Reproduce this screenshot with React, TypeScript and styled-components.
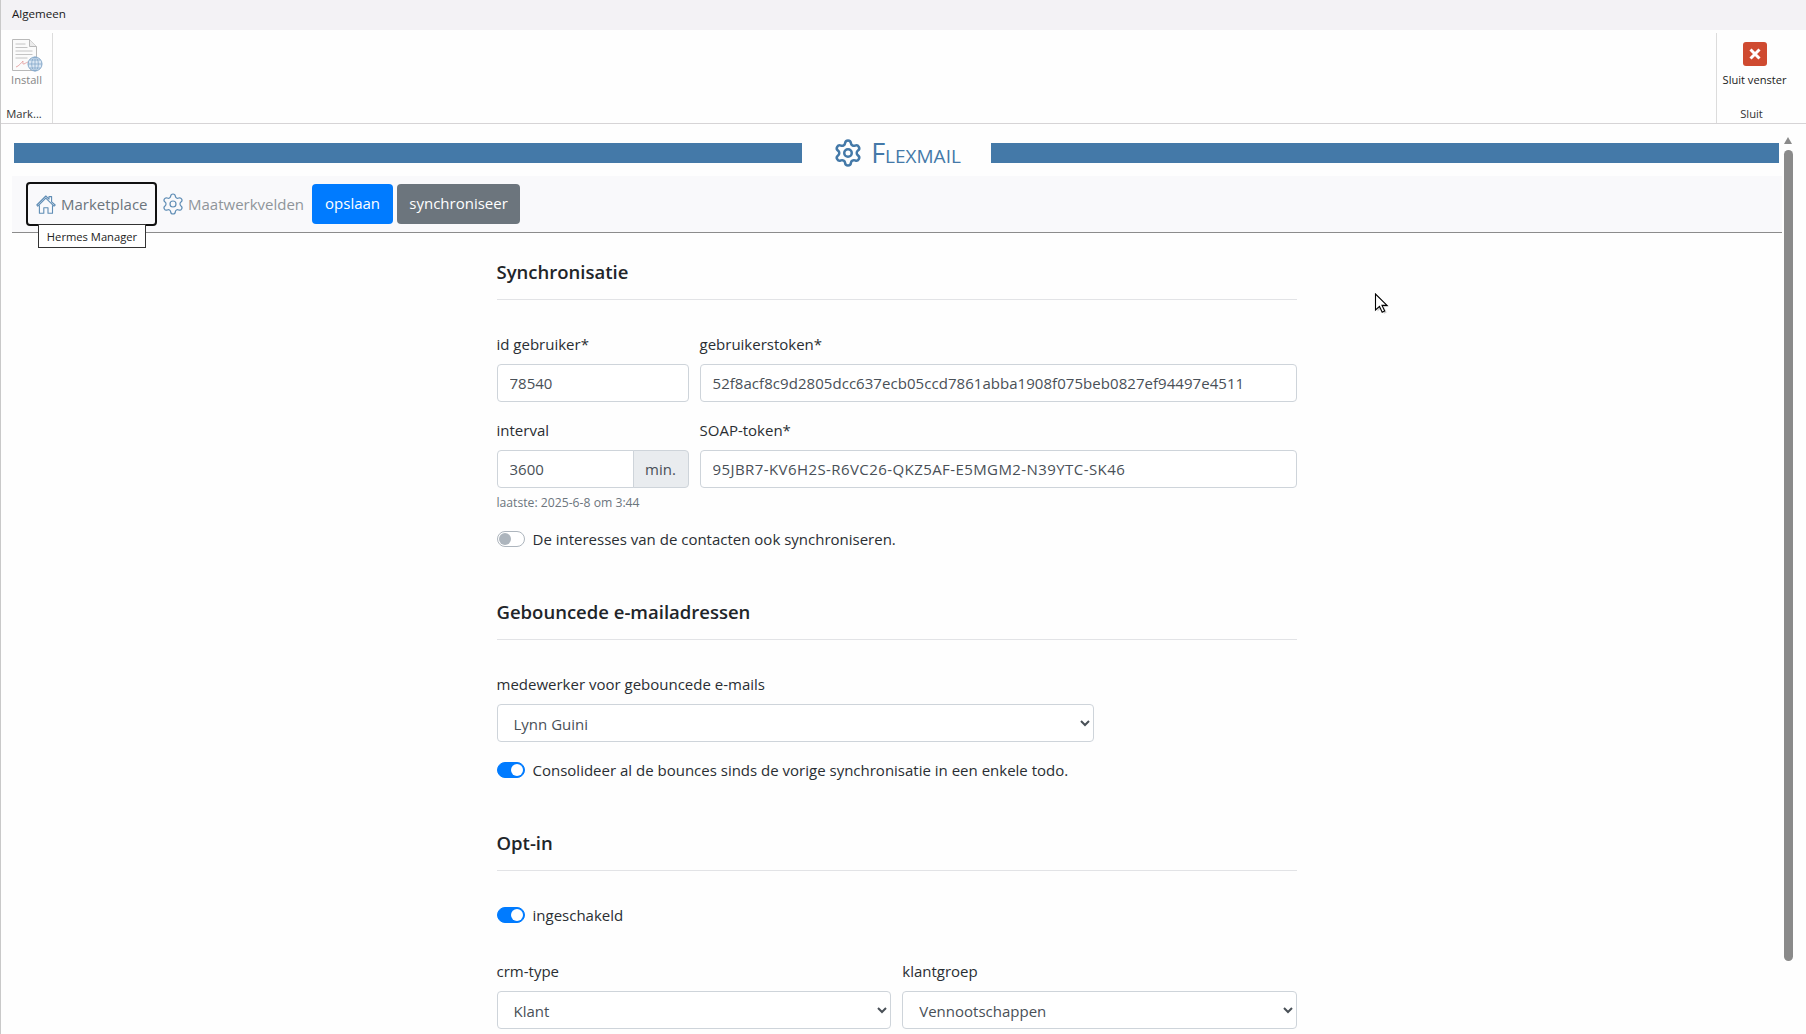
import React from "react";
import styled, { createGlobalStyle } from "styled-components";
import { Settings } from "lucide-react";

const Global = createGlobalStyle`
  html, body { margin: 0; padding: 0; height: 100%; background: #fefefe; }
  #root { height: 100%; }
  * { box-sizing: border-box; }
  body { font-family: "Open Sans", "Noto Sans", sans-serif; font-size: 15px; color: #212529; overflow: hidden; }
`;

const Page = styled.div`
  position: relative;
  height: 1034px;
  display: flex;
  flex-direction: column;
  overflow: hidden;
  border-left: 1px solid #c9c9c9;
`;

const TabBar = styled.div`
  height: 30px;
  flex: none;
  display: flex;
  align-items: center;
  padding: 0 0 4px 11px;
  background: #f3f2f5;
  font-size: 11.6px;
  color: #1a1a1a;
`;

const Ribbon = styled.div`
  height: 94px;
  flex: none;
  display: flex;
  justify-content: space-between;
  background: #fefefe;
  border-bottom: 1px solid #d6d4d6;
`;

const RibbonGroup = styled.div<{ $w: number; $side: "left" | "right"; $pr?: number }>`
  width: ${(p) => p.$w}px;
  margin-top: 3px;
  padding-right: ${(p) => p.$pr ?? 0}px;
  display: flex;
  flex-direction: column;
  align-items: center;
  ${(p) => (p.$side === "left" ? "border-right" : "border-left")}: 1px solid #dcdcdc;
`;

const RibbonAction = styled.div<{ $muted?: boolean }>`
  height: 74px;
  padding-top: 5px;
  display: flex;
  flex-direction: column;
  align-items: center;
  font-size: 11.1px;
  line-height: 14px;
  white-space: nowrap;
  color: ${(p) => (p.$muted ? "#858585" : "#1a1a1a")};
`;

const RibbonIconSlot = styled.div`
  height: 34px;
  display: flex;
  align-items: flex-start;
  justify-content: center;
  margin-bottom: 1px;
`;

const CloseIcon = styled.div`
  width: 24px;
  height: 24px;
  margin-top: 4px;
  border-radius: 3px;
  background: #cf4a30;
  display: flex;
  align-items: center;
  justify-content: center;
`;

const RibbonLabel = styled.div<{ $mr?: number }>`
  margin-right: ${(p) => p.$mr ?? 0}px;
  font-size: 11.2px;
  line-height: 14px;
  color: #333;
  white-space: nowrap;
`;

const Main = styled.div`
  flex: 1;
  display: flex;
  min-height: 0;
`;

const Content = styled.div`
  flex: 1;
  min-width: 0;
  padding-left: 11px;
`;

const Scroll = styled.div`
  width: 24px;
  flex: none;
  padding: 13px 0 0 2px;
  display: flex;
  flex-direction: column;
  gap: 6px;
`;

const ScrollArrow = styled.div`
  width: 0;
  height: 0;
  border-left: 4.5px solid transparent;
  border-right: 4.5px solid transparent;
  border-bottom: 7px solid #8a8a8a;
`;

const ScrollThumb = styled.div`
  width: 9px;
  height: 811px;
  border-radius: 5px;
  background: #8a8a8a;
`;

const Banner = styled.div`
  margin: 19px 3px 0 2px;
  height: 20px;
  display: flex;
  align-items: center;
`;

const BannerBar = styled.div`
  height: 20px;
  flex: 1;
  background: #4479a8;
`;

const BannerTitle = styled.div`
  width: 189px;
  flex: none;
  display: flex;
  align-items: center;
  justify-content: center;
  gap: 8px;
  padding-left: 1px;
  color: #4479a8;
  font-size: 27px;
  font-variant: small-caps;
  line-height: 20px;
`;

const SubBar = styled.div`
  margin-top: 13px;
  height: 57px;
  padding: 6px 0 0 14px;
  display: flex;
  align-items: flex-start;
  background: #f9f9fb;
  border-bottom: 1px solid #8c8c8c;
`;

const NavButton = styled.div`
  position: relative;
  width: 131px;
  height: 44px;
  display: flex;
  align-items: center;
  gap: 5px;
  padding-left: 8px;
  border: 2px solid #111;
  border-radius: 4px;
  color: #6c757d;
  white-space: nowrap;
`;

const Tooltip = styled.div`
  position: absolute;
  left: 10px;
  top: 40px;
  width: 108px;
  height: 24px;
  display: flex;
  align-items: center;
  justify-content: center;
  background: #fff;
  border: 1px solid #333;
  font-size: 11.2px;
  color: #222;
`;

const NavLink = styled.div`
  height: 44px;
  margin-left: 4px;
  display: flex;
  align-items: center;
  gap: 3px;
  color: #8f959a;
  white-space: nowrap;
`;

const ActionButton = styled.div<{ $bg: string; $w: number; $ml: number }>`
  width: ${(p) => p.$w}px;
  height: 40px;
  margin: 2px 0 0 ${(p) => p.$ml}px;
  display: flex;
  align-items: center;
  justify-content: center;
  border-radius: 4px;
  background: ${(p) => p.$bg};
  color: #fff;
  padding-bottom: 2px;
`;

const Form = styled.div`
  width: 800.5px;
  margin-left: 484.5px;
`;

const Section = styled.section<{ $mt: number }>`
  margin-top: ${(p) => p.$mt}px;
`;

const Heading = styled.h5`
  margin: 0 0 33px;
  padding-bottom: 15px;
  font-size: 18.5px;
  line-height: 24px;
  font-weight: 600;
  color: #212529;
  border-bottom: 1px solid #e2e3e6;
`;

const Row = styled.div<{ $cols: string; $mt?: number }>`
  display: grid;
  grid-template-columns: ${(p) => p.$cols};
  column-gap: 11px;
  margin-top: ${(p) => p.$mt ?? 0}px;
`;

const Label = styled.label`
  display: block;
  margin-bottom: 9px;
  line-height: 22px;
  color: #2a2e33;
`;

const Input = styled.input<{ $spacing?: number }>`
  display: block;
  width: 100%;
  height: 38px;
  padding: 0 12px;
  font: inherit;
  letter-spacing: ${(p) => p.$spacing ?? 0}px;
  color: #495057;
  background: #fff;
  border: 1px solid #ced4da;
  border-radius: 4px;
  outline: none;
`;

const InputGroup = styled.div`
  display: flex;
`;

const GroupInput = styled(Input)`
  flex: 1;
  min-width: 0;
  border-radius: 4px 0 0 4px;
`;

const Addon = styled.div`
  width: 56px;
  flex: none;
  display: flex;
  align-items: center;
  justify-content: center;
  margin-left: -1px;
  color: #495057;
  background: #e9ecef;
  border: 1px solid #ced4da;
  border-radius: 0 4px 4px 0;
`;

const Select = styled.select<{ $w?: number }>`
  display: block;
  width: ${(p) => (p.$w ? `${p.$w}px` : "100%")};
  height: 38px;
  padding: 1px 8px 0 12px;
  font: inherit;
  color: #495057;
  background: #fff;
  border: 1px solid #ced4da;
  border-radius: 4px;
  outline: none;
`;

const Help = styled.div`
  margin-top: 5px;
  font-size: 12.2px;
  line-height: 19px;
  color: #6c757d;
`;

const SwitchRow = styled.div<{ $mt: number }>`
  margin-top: ${(p) => p.$mt}px;
  display: flex;
  align-items: center;
  gap: 8px;
  line-height: 24px;
  color: #2a2e33;
`;

const Switch = styled.span<{ $on?: boolean }>`
  width: 28px;
  height: 16px;
  flex: none;
  display: flex;
  align-items: center;
  justify-content: ${(p) => (p.$on ? "flex-end" : "flex-start")};
  padding: 0 1px;
  border-radius: 8px;
  border: 1px solid ${(p) => (p.$on ? "#007bff" : "#adb5bd")};
  background: ${(p) => (p.$on ? "#007bff" : "#fff")};
  &::after {
    content: "";
    width: 12px;
    height: 12px;
    border-radius: 50%;
    background: ${(p) => (p.$on ? "#fff" : "#adb5bd")};
  }
`;

const Cursor = styled.svg`
  position: absolute;
  left: 1373px;
  top: 293px;
`;

const InstallIcon = () => (
  <svg width="32" height="34" viewBox="0 0 32 34" fill="none">
    <path d="M1.5 1.5h17l7 7v24h-24z" fill="#fbfbfb" stroke="#b9b9b9" />
    <path d="M18.5 1.5v7h7" fill="#ececec" stroke="#b9b9b9" />
    <path d="M4.5 6h10M4.5 9.5h12M4.5 13h17M4.5 16.5h17M4.5 20h12" stroke="#c4c4c4" />
    <path d="M5 29c3-1 5-4 7-6 0 2-1 3 1 3 2-1 3-2 5-2" stroke="#e7a9a9" />
    <circle cx="24" cy="26" r="7" fill="#dbe7f3" stroke="#83a7c9" />
    <path d="M17 26h14M24 19v14M19 22h10M19 30h10" stroke="#83a7c9" strokeWidth=".8" />
    <ellipse cx="24" cy="26" rx="3.3" ry="7" stroke="#83a7c9" strokeWidth=".8" />
  </svg>
);

const HomeIcon = () => (
  <svg width="20" height="19" viewBox="0 0 20 19" fill="none" stroke="#5f8db5" strokeWidth="1.1" strokeLinejoin="round">
    <path d="M.8 10 9.8 1l3.2 3.2V1.6h2.6v5.2L19.2 10l-1.2 1.2-8.2-8-8 8z" />
    <path d="M3.4 10.2v8h4.4v-5.4h4.2v5.4h4.5v-8" />
  </svg>
);

export default function App() {
  return (
    <>
      <Global />
      <Page>
        <TabBar>Algemeen</TabBar>
        <Ribbon>
          <RibbonGroup $w={52} $side="left">
            <RibbonAction $muted>
              <RibbonIconSlot>
                <InstallIcon />
              </RibbonIconSlot>
              Install
            </RibbonAction>
            <RibbonLabel $mr={5}>Mark...</RibbonLabel>
          </RibbonGroup>
          <RibbonGroup $w={90} $side="right" $pr={14}>
            <RibbonAction>
              <RibbonIconSlot>
                <CloseIcon>
                  <svg width="14" height="14" viewBox="0 0 14 14">
                    <path d="M2.5 2.5l9 9M11.5 2.5l-9 9" stroke="#fff" strokeWidth="3" />
                  </svg>
                </CloseIcon>
              </RibbonIconSlot>
              Sluit venster
            </RibbonAction>
            <RibbonLabel $mr={6}>Sluit</RibbonLabel>
          </RibbonGroup>
        </Ribbon>
        <Main>
          <Content>
            <Banner>
              <BannerBar />
              <BannerTitle>
                <Settings size={30} strokeWidth={2} color="#4479a8" />
                Flexmail
              </BannerTitle>
              <BannerBar />
            </Banner>
            <SubBar>
              <NavButton>
                <HomeIcon />
                Marketplace
                <Tooltip>Hermes Manager</Tooltip>
              </NavButton>
              <NavLink>
                <Settings size={24} strokeWidth={1.2} color="#5f8db5" />
                Maatwerkvelden
              </NavLink>
              <ActionButton $bg="#007bff" $w={81} $ml={8}>
                opslaan
              </ActionButton>
              <ActionButton $bg="#6c757d" $w={123} $ml={4}>
                synchroniseer
              </ActionButton>
            </SubBar>
            <Form>
              <Section $mt={27}>
                <Heading>Synchronisatie</Heading>
                <Row $cols="192px 1fr">
                  <div>
                    <Label>id gebruiker*</Label>
                    <Input readOnly value="78540" />
                  </div>
                  <div>
                    <Label>gebruikerstoken*</Label>
                    <Input readOnly $spacing={0.05} value="52f8acf8c9d2805dcc637ecb05ccd7861abba1908f075beb0827ef94497e4511" />
                  </div>
                </Row>
                <Row $cols="192px 1fr" $mt={17}>
                  <div>
                    <Label>interval</Label>
                    <InputGroup>
                      <GroupInput readOnly value="3600" />
                      <Addon>min.</Addon>
                    </InputGroup>
                    <Help>laatste: 2025-6-8 om 3:44</Help>
                  </div>
                  <div>
                    <Label>SOAP-token*</Label>
                    <Input readOnly $spacing={0.42} value="95JBR7-KV6H2S-R6VC26-QKZ5AF-E5MGM2-N39YTC-SK46" />
                  </div>
                </Row>
                <SwitchRow $mt={15}>
                  <Switch />
                  De interesses van de contacten ook synchroniseren.
                </SwitchRow>
              </Section>
              <Section $mt={49}>
                <Heading>Gebouncede e-mailadressen</Heading>
                <Label>medewerker voor gebouncede e-mails</Label>
                <Select $w={597} defaultValue="Lynn Guini">
                  <option>Lynn Guini</option>
                </Select>
                <SwitchRow $mt={16}>
                  <Switch $on />
                  Consolideer al de bounces sinds de vorige synchronisatie in een enkele todo.
                </SwitchRow>
              </Section>
              <Section $mt={49}>
                <Heading>Opt-in</Heading>
                <SwitchRow $mt={-1}>
                  <Switch $on />
                  ingeschakeld
                </SwitchRow>
                <Row $cols="1fr 1fr" $mt={33}>
                  <div>
                    <Label>crm-type</Label>
                    <Select defaultValue="Klant">
                      <option>Klant</option>
                    </Select>
                  </div>
                  <div>
                    <Label>klantgroep</Label>
                    <Select defaultValue="Vennootschappen">
                      <option>Vennootschappen</option>
                    </Select>
                  </div>
                </Row>
              </Section>
            </Form>
          </Content>
          <Scroll>
            <ScrollArrow />
            <ScrollThumb />
          </Scroll>
        </Main>
        <Cursor width="18" height="24" viewBox="0 0 18 24">
          <path d="M3.5 2.5v16l4-3.6 2.7 5.8 2.5-1.2-2.7-5.6h5z" fill="#999" opacity=".45" />
          <path d="M1.5 1v16l4-3.6 2.7 5.8 2.5-1.2-2.7-5.6h5z" fill="#fff" stroke="#000" strokeWidth="1.1" />
        </Cursor>
      </Page>
    </>
  );
}
